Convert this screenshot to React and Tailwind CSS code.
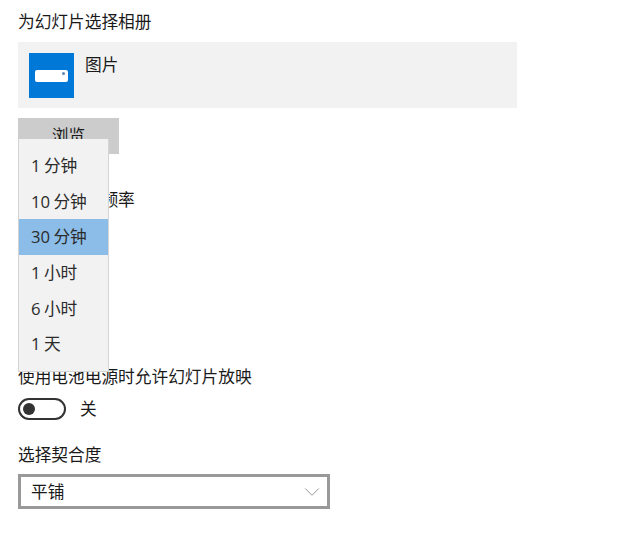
import { ChevronDown } from "lucide-react";

const intervals = ["1 分钟", "10 分钟", "30 分钟", "1 小时", "6 小时", "1 天"];

export default function App() {
  return (
    <div className="relative h-[548px] w-[620px] bg-white pl-[18px] font-['Open_Sans','Noto_Sans_CJK_SC',sans-serif] text-[16.7px] text-[#1a1a1a]">
      <div className="flex h-[42px] items-center pt-[3px] leading-none">为幻灯片选择相册</div>

      <div className="flex h-[66px] w-[499px] gap-[11px] bg-[#f2f2f2] pl-[11px] pt-[11px]">
        <div className="flex h-[45px] w-[45px] items-center justify-center bg-[#0078d7]">
          <div className="relative h-[12px] w-[33px] rounded-[2px] bg-white">
            <span className="absolute right-[3px] top-[2px] h-[3px] w-[3px] rounded-full bg-[#5a86b8]" />
          </div>
        </div>
        <span className="pt-[2px] leading-[20px]">图片</span>
      </div>

      <button className="mt-[10px] block h-[36px] w-[101px] bg-[#cccccc] text-center text-[16.7px] leading-[36px]">浏览</button>

      <div className="mt-[36px] leading-[20px]">更改图片的频率</div>

      <div className="mt-[157px] leading-[20px]">使用电池电源时允许幻灯片放映</div>

      <div className="mt-[11px] flex h-[22px] items-center gap-[10px]">
        <div className="flex h-[22px] w-[48px] items-center rounded-full border-2 border-[#333333] pl-[3px]">
          <span className="h-[12px] w-[12px] rounded-full bg-[#333333]" />
        </div>
        <span className="ml-[4px]">关</span>
      </div>

      <div className="mt-[25px] leading-[20px]">选择契合度</div>

      <div className="mt-[9px] flex h-[35px] w-[312px] items-center justify-between border-[3px] border-[#999999] bg-white pl-[10px] pr-[2px]">
        <span>平铺</span>
        <ChevronDown className="h-[26px] w-[26px] text-[#777777]" strokeWidth={0.7} />
      </div>

      <div className="absolute left-[18px] top-[139px] h-[233px] w-[91px] border border-[#d4d4d4] border-t-0 bg-[#f2f2f2] pt-[9px] [word-spacing:-1px]">
        {intervals.map((label) => (
          <div
            key={label}
            className={`h-[35.7px] pl-[12px] leading-[35.7px] text-[#2b2b2b] ${label === "30 分钟" ? "bg-[#8cbde8] text-[#1d3a55]" : ""}`}
          >
            {label}
          </div>
        ))}
      </div>
    </div>
  );
}
